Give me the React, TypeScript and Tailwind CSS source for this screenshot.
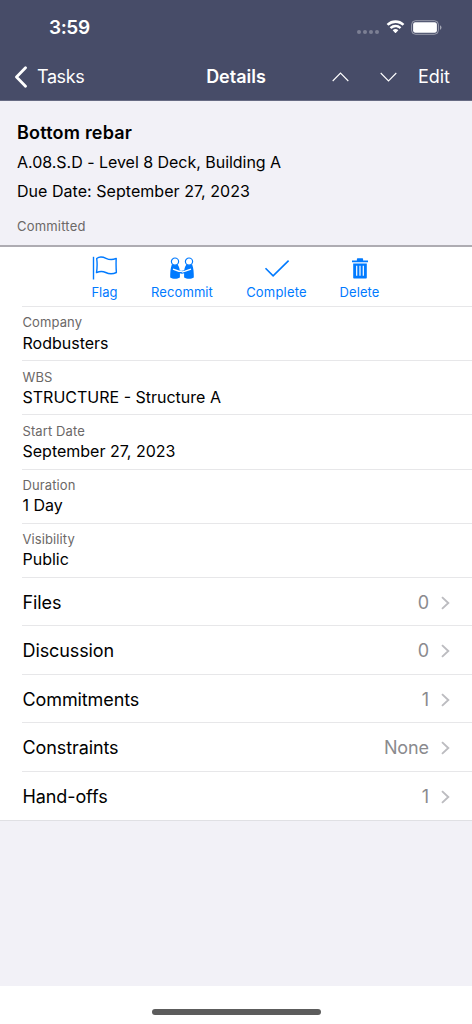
import React from "react";

interface Row {
  label: string;
  value: string;
}

const fields: Row[] = [
  { label: "Company", value: "Rodbusters" },
  { label: "WBS", value: "STRUCTURE - Structure A" },
  { label: "Start Date", value: "September 27, 2023" },
  { label: "Duration", value: "1 Day" },
  { label: "Visibility", value: "Public" },
];

const links: Row[] = [
  { label: "Files", value: "0" },
  { label: "Discussion", value: "0" },
  { label: "Commitments", value: "1" },
  { label: "Constraints", value: "None" },
  { label: "Hand-offs", value: "1" },
];

/* ── Icons ────────────────────────────────────────────────── */
const WifiIcon = () => (
  <svg className="w-[19px] h-[14px]" viewBox="0 0 19 14" fill="#fff">
    <path d="M9.5 2.900c2.600 0 5 1 6.800 2.700.1.1.3.1.5 0l1.300-1.400c.2-.1.2-.4 0-.5a12.400 12.400 0 0 0-17.200 0c-.2.1-.2.4 0 .5l1.300 1.400c.2.1.4.1.5 0A9.900 9.900 0 0 1 9.500 2.900Z" />
    <path d="M9.500 7.300c1.400 0 2.800.5 3.800 1.500.2.1.4.1.5 0l1.300-1.400c.2-.2.2-.4 0-.5a8.200 8.200 0 0 0-11.200 0c-.2.1-.2.300 0 .5l1.300 1.400c.1.1.3.1.5 0a5.600 5.600 0 0 1 3.800-1.500Z" />
    <path d="M12.100 10.500c.2-.2.200-.4 0-.5a4 4 0 0 0-5.200 0c-.2.100-.2.300 0 .5l2.300 2.400c.2.200.4.200.6 0Z" />
  </svg>
);

const BatteryIcon = () => (
  <svg className="w-[31px] h-[15px]" viewBox="0 0 31 15" fill="none">
    <rect x="0.6" y="0.7" width="26.8" height="13.6" rx="4" stroke="#fff" strokeOpacity="0.45" />
    <rect x="2.1" y="2.2" width="23.8" height="10.6" rx="2.2" fill="#fff" />
    <path d="M29 5.200v4.600c.9-.4 1.500-1.300 1.500-2.300S29.900 5.600 29 5.200Z" fill="#fff" fillOpacity="0.5" />
  </svg>
);

const FlagIcon = () => (
  <svg className="w-[26px] h-[24px]" viewBox="0 0 26 24" fill="none" stroke="#007aff" strokeWidth="1.4">
    <path d="M1.500 .8v22.700" />
    <path d="M4.700 2.500c2.400-1.900 6-1.700 9.300-.2 3.300 1.600 6.900 1.600 10.200.1-.2 4.700-.2 9.700.2 14.100-3.800 1.800-7.400 1.600-10.700 0-2.700-1.300-6.400-1.200-9.200.1.700-4.500.8-9.500.2-14.100Z" strokeLinejoin="round" />
  </svg>
);

/* two figures shaking hands */
const RecommitIcon = () => (
  <svg className="w-[26px] h-[24px]" viewBox="0 0 26 24">
    <path d="M2.800 8.600h5.800c1.600 2.400 2.300 5 2.300 8v4.800c-2.700 1.700-7.200 1.700-9.700 0-.1-4.500.3-9.200 1.600-12.800Z" fill="#007aff" />
    <path d="M23.200 8.600h-5.800c-1.600 2.400-2.300 5-2.300 8v4.800c2.700 1.700 7.200 1.700 9.700 0 .1-4.500-.3-9.200-1.600-12.800Z" fill="#007aff" />
    <circle cx="6" cy="5.600" r="3.600" fill="#fff" stroke="#007aff" strokeWidth="1.200" />
    <circle cx="20" cy="5.600" r="3.600" fill="#fff" stroke="#007aff" strokeWidth="1.200" />
    <path d="m4.200 12.600 5.600 1.300 3.200.8 3.200-.8 5.600-1.300v3l-5.300 1.500-3.500.6-3.500-.6-5.300-1.500Z" fill="#007aff" />
    <path d="m4 13.200 5.800 2h3m9.200-2-5.800 2-3.400.9" fill="none" stroke="#fff" strokeWidth="1.400" />
  </svg>
);

const CheckIcon = () => (
  <svg className="w-[26px] h-[24px]" viewBox="0 0 26 24" fill="none" stroke="#007aff" strokeWidth="1.6">
    <path d="m1.500 12.200 7.600 7.600L24.600 4.600" />
  </svg>
);

const TrashIcon = () => (
  <svg className="w-[26px] h-[24px]" viewBox="0 0 26 24">
    <path d="M5 6.300h16V4.500h-4.900V3.200c0-.6-.4-1-1-1h-4.200c-.6 0-1 .4-1 1v1.300H5v1.800Zm1.200 1.300h13.600v14.100c0 .4-.3.700-.7.700H6.900c-.4 0-.7-.3-.7-.7V7.600Z" fill="#007aff" />
    <path d="M9.700 9.800v10M13 9.800v10M16.300 9.800v10" stroke="#fff" strokeWidth="1.200" />
  </svg>
);

const ChevronRight = () => (
  <svg className="w-[9px] h-[14px]" viewBox="0 0 9 14" fill="none" stroke="#bcbcc0" strokeWidth="1.9">
    <path d="m1 1.100 6.300 5.900L1 12.900" />
  </svg>
);

const TaskDetails = () => {
  return (
    <div className="w-[472px] h-[1024px] flex flex-col bg-[#f2f1f7] text-black font-['Inter','Liberation_Sans',sans-serif] overflow-hidden whitespace-nowrap">

      {/* STATUS BAR + NAVIGATION */}
      <header className="h-[101px] shrink-0 bg-[#474c68] border-b border-[#676b83] text-white">
        <div className="h-[54px] flex items-center justify-between pl-[49px] pr-[30px]">
          <span className="mt-[2px] text-[19px] leading-6 font-semibold tracking-[-0.4px]">3:59</span>
          <div className="flex items-center">
            <div className="flex gap-[2px] mr-[7px] mt-[10px]">
              <i className="size-1 rounded-full bg-[#7c8094]" />
              <i className="size-1 rounded-full bg-[#7c8094]" />
              <i className="size-1 rounded-full bg-[#7c8094]" />
              <i className="size-1 rounded-full bg-[#7c8094]" />
            </div>
            <WifiIcon />
            <div className="ml-[6px]"><BatteryIcon /></div>
          </div>
        </div>
        <div className="h-[46px] grid grid-cols-[1fr_auto_1fr] items-center pl-[14px] pr-[22px]">
          <div className="flex items-center">
            <svg className="w-[14px] h-[22px] mr-[9px]" viewBox="0 0 14 22" fill="none" stroke="#fff" strokeWidth="2.8" strokeLinecap="round" strokeLinejoin="round">
              <path d="M11.500 1.700 2.500 11l9 9.300" />
            </svg>
            <span className="text-[18px] leading-6 tracking-[-0.4px]">Tasks</span>
          </div>
          <h1 className="text-[18px] leading-6 font-semibold ml-[8px]">Details</h1>
          <div className="flex items-center justify-end">
            <svg className="w-[17px] h-[10px] mr-[31px]" viewBox="0 0 17 10" fill="none" stroke="#fff" strokeWidth="1.1">
              <path d="m.7 9 7.800-8 7.800 8" />
            </svg>
            <svg className="w-[17px] h-[10px] mr-[21px]" viewBox="0 0 17 10" fill="none" stroke="#fff" strokeWidth="1.1">
              <path d="m.7 1 7.800 8 7.800-8" />
            </svg>
            <span className="text-[18px] leading-6">Edit</span>
          </div>
        </div>
      </header>

      {/* TASK SUMMARY */}
      <section className="h-[146px] shrink-0 pl-[17px] pt-5 border-b-2 border-[#aeacb2]">
        <h2 className="text-[18px] leading-6 font-semibold tracking-[0.2px]">Bottom rebar</h2>
        <p className="mt-[5px] text-[16px] leading-6 tracking-[-0.03px]">A.08.S.D - Level 8 Deck, Building A</p>
        <p className="mt-[5px] text-[16px] leading-6 tracking-[0.04px]">Due Date: September 27, 2023</p>
        <p className="mt-[13px] text-[13px] leading-5 text-[#6b6867] tracking-[0.2px]">Committed</p>
      </section>

      <main className="shrink-0 bg-white border-b border-[#e0e0e4]">
        {/* ACTIONS */}
        <div className="ml-[22px] h-[60px] border-b border-[#e7e7e9] flex pt-[9px] pl-[69px] text-[13px] leading-4 text-[#007aff]">
          <button className="w-[27px] flex flex-col items-center gap-1">
            <FlagIcon />
            <span>Flag</span>
          </button>
          <button className="ml-[33px] w-[62px] flex flex-col items-center gap-1">
            <RecommitIcon />
            <span className="tracking-[0.1px]">Recommit</span>
          </button>
          <button className="ml-[33px] w-[61px] flex flex-col items-center gap-1">
            <CheckIcon />
            <span className="tracking-[0.2px]">Complete</span>
          </button>
          <button className="ml-[32px] w-[41px] flex flex-col items-center gap-1">
            <TrashIcon />
            <span className="tracking-[0.1px]">Delete</span>
          </button>
        </div>

        {/* FIELDS */}
        {fields.map((f) => (
          <div key={f.label} className="ml-[22px] pl-[0.5px] h-[54.2px] pt-[6.4px] border-b border-[#e7e7e9]">
            <p className="text-[13px] leading-[18px] text-[#6b6867] tracking-[0.1px]">{f.label}</p>
            <p className="pt-[0.2px] text-[16px] leading-[22px]">{f.value}</p>
          </div>
        ))}

        {/* LINKS */}
        {links.map((l, i) => (
          <div key={l.label} className={`ml-[22px] pl-[0.5px] pt-[2px] h-[48.5px] flex items-center justify-between pr-[22px] text-[18px] leading-6 ${i < links.length - 1 ? "border-b border-[#e7e7e9]" : ""}`}>
            <span className="tracking-[-0.1px]">{l.label}</span>
            <div className="flex items-center gap-[12px] text-[#8a8a8e]">
              <span className="tracking-[-0.1px]">{l.value}</span>
              <ChevronRight />
            </div>
          </div>
        ))}
      </main>

      {/* HOME INDICATOR */}
      <footer className="mt-auto h-[38px] shrink-0 bg-white flex justify-center pt-[23px]">
        <div className="w-[169px] h-[6px] rounded-full bg-[#5c5c5c]" />
      </footer>
    </div>
  );
};

export default TaskDetails;
